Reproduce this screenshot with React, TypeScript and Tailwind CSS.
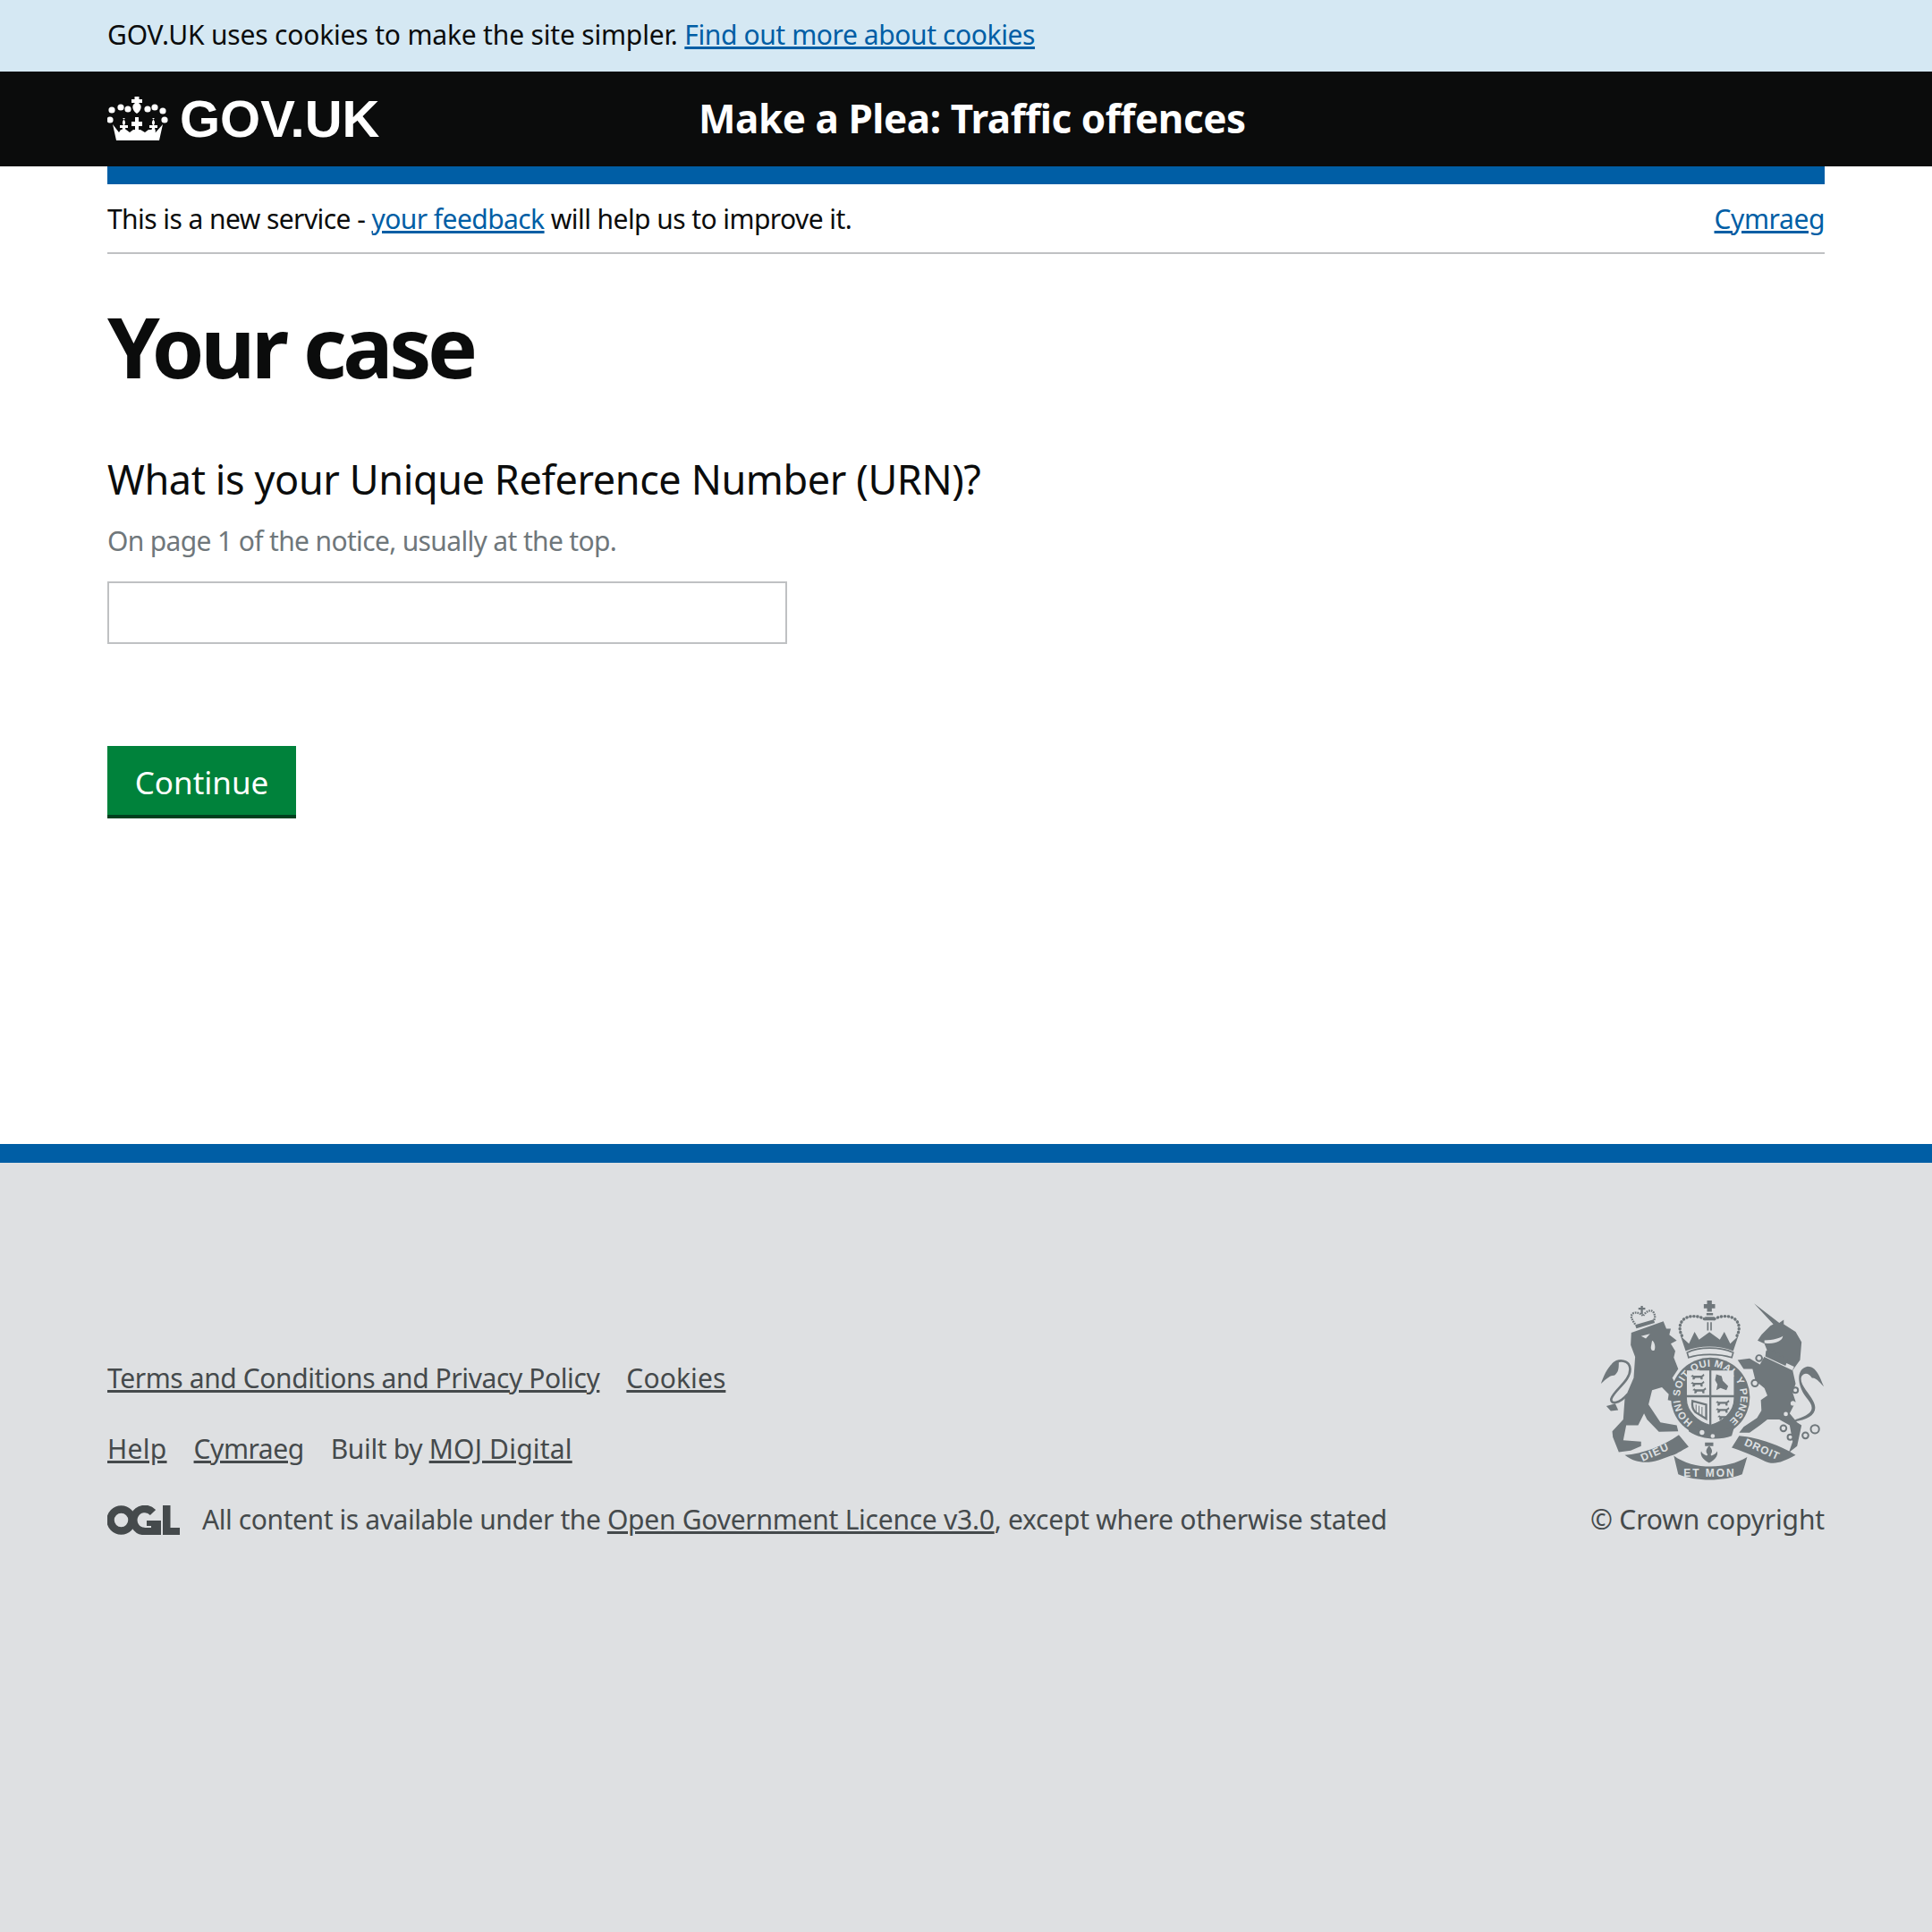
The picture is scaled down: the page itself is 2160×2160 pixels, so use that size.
const font = { fontFamily: '"Noto Sans", sans-serif' };

function CrownLogo() {
  const dots = [[5, 16], [15, 13], [23, 15], [45, 15], [53, 13], [62, 17], [3, 27], [64, 27]];
  return (
    <svg viewBox="0 0 69 52" className="h-[52px] w-[69px] shrink-0" fill="#fff">
      {dots.map(([x, y]) => (
        <circle key={`${x}-${y}`} cx={x} cy={y} r="3.6" />
      ))}
      <path d="M30.5 1h5v3h3.5v4h-3.5v1c3 1 3.5 7 -2.5 11c-6 -4 -5.500 -10 -2.500 -11v-1h-3.500v-4h3.500z" />
      <path d="M31 24h4v5h4v5h-4v6h-4v-6h-4v-5h4z" />
      <path d="M17 25c3 3 4 5 2 8h4v3h-3l1 4h-5l1 -4h-3v-3h4c-2 -3 -1 -5 2 -8z" />
      <path d="M50 25c3 3 4 5 2 8h4v3h-3l1 4h-5l1 -4h-3v-3h4c-2 -3 -1 -5 2 -8z" />
      <path d="M6 32L13 41L15 38H21L25 41L29 38H37L42 41L46 38H52L54 41L62 32L58 50H10Z" />
    </svg>
  );
}

function OglLogo() {
  return (
    <svg viewBox="0 0 81 33" className="h-[33px] w-[81px] shrink-0" fill="none">
      <circle cx="15.500" cy="16.500" r="12" stroke="#454a4c" strokeWidth="8.500" />
      <path d="M51 8A12.500 12.500 0 1 0 41.500 29" stroke="#454a4c" strokeWidth="8.500" />
      <path d="M44 17H60V33H41V25H49V23H44Z" fill="#454a4c" />
      <path d="M62 0h8.500v25H81v8H62z" fill="#454a4c" />
    </svg>
  );
}

function Passant({ x, y }: { x: number; y: number }) {
  return <path d={`M${x} ${y}l6 -6l4 3h26l8 -6l2 6l-6 4v9h-6l-2 -6h-16l-4 6h-6l1 -9z`} />;
}

function Crest() {
  const c = "#6f777b";
  const bg = "#dee0e2";
  return (
    <svg viewBox="88 64 754 614" className="h-[204px] w-[251px]" fill={c}>
      {/* lion crown */}
      <path d="M205 150C195 135 185 120 200 112C212 108 225 115 232 122C240 108 260 95 268 112C275 125 270 135 265 140" fill="none" stroke={c} strokeWidth="7" strokeDasharray="5 3" />
      <path d="M216 94h8v-6h7v6h8v7h-8v15h-7v-15h-8z" />
      <path d="M205 152l62 -18l4 11l-62 19z" />
      {/* lion */}
      <path d="M192 178L300 140L310 165L325 165L320 185L345 205L325 215L340 240L335 262L350 300L330 330L360 385L345 412L315 405L318 385L295 362L262 372L250 420L290 480L345 490L350 510L285 512L245 470L235 450L215 490L175 490L165 540L225 545L225 560L190 575L150 580L130 530L128 510L165 470L170 400L200 330L205 260L190 220Z" />
      <path d="M225 190l30 -8l-14 16zM262 205c10 5 12 25 8 32c-8 5 -12 -2 -12 -10z" fill={bg} />
      <path d="M180 385C150 420 120 420 125 400C135 370 190 340 188 300C186 270 150 265 130 285" fill="none" stroke={c} strokeWidth="8" />
      <path d="M150 272C120 275 100 320 90 350C110 330 125 320 135 322C150 310 150 300 150 272Z" />
      <path d="M108 425l30 -8l10 22l-25 3z" />
      {/* unicorn */}
      <path d="M605 80L690 145L705 135L705 150L745 175L765 210L760 270L735 305L745 350L735 380L745 410L725 450L750 480L765 490L750 560L722 582L735 545L725 490L690 470L650 470L625 490L590 515L555 515L570 495L615 465L630 440L628 405L650 390L640 365L610 340L600 300L570 300L550 270L590 265L625 285L650 240L640 215L617 205L630 185L660 155L670 150Z" />
      <path d="M640 245l100 48l-6 12l-98 -47z" fill={bg} />
      <path d="M645 240l12 -8l6 10l10 -5l4 12l12 -3l2 12l12 -2l2 12l14 0l-8 22l-68 -32z" />
      <path d="M640 204c30 0 55 -8 62 -15c0 18 -30 30 -62 24z" fill={bg} />
      <path d="M745 470C810 450 810 430 780 395C750 355 745 300 785 292C815 292 825 325 840 360C820 340 815 330 800 330C790 315 775 310 765 325C755 350 790 380 805 410C825 450 790 470 740 478Z" />
      <g fill={bg} stroke={c} strokeWidth="6">
        <circle cx="622" cy="264" r="10" />
        <circle cx="608" cy="348" r="11" />
        <circle cx="744" cy="372" r="9" />
        <circle cx="704" cy="500" r="10" />
        <circle cx="727" cy="530" r="9" />
        <circle cx="778" cy="524" r="10" />
        <circle cx="810" cy="503" r="14" />
      </g>
      <g fill={bg}>
        <circle cx="736" cy="416" r="8" />
        <circle cx="712" cy="452" r="7" />
      </g>
      {/* royal crown */}
      <path d="M447 70h16v12h11v14h-11v12h-16v-12h-11v-14h11z" />
      <path d="M445 112h22v8h-22zM447 143h5v28h-5zM458 143h5v28h-5zM440 125h32v12h-32z" />
      <path d="M375 240L358 190L386 215L405 175L420 202L455 176L490 202L505 175L525 215L552 190L535 240C490 220 420 220 375 240Z" />
      <path d="M438 132C420 122 390 118 370 132C350 148 352 175 368 198M472 132C490 122 520 118 540 132C560 148 558 175 542 198" fill="none" stroke={c} strokeWidth="10" strokeDasharray="1 11" strokeLinecap="round" />
      <path d="M380 245C420 225 490 225 535 245L530 262C490 248 420 248 385 262Z" fill={bg} stroke={c} strokeWidth="5" />
      {/* garter */}
      <circle cx="458" cy="395" r="133" />
      {/* shield */}
      <path d="M372 298H544V400C544 450 500 485 458 496C416 485 372 450 372 400Z" fill={bg} stroke={c} strokeWidth="4" transform="translate(458 395) scale(0.94) translate(-458 -395)" />
      <path d="M458 295V495M376 392H540" stroke={c} strokeWidth="7" />
      <Passant x={392} y={326} />
      <Passant x={392} y={350} />
      <Passant x={398} y={372} />
      <path d="M478 318l18 6l4 16l18 18l-6 14l-20 -8l-14 8l4 -20l-8 -14z" />
      <Passant x={476} y={414} />
      <Passant x={476} y={438} />
      <Passant x={482} y={462} />
      <path d="M398 408L444 420V468L408 446C398 436 396 420 398 408Z" fill="none" stroke={c} strokeWidth="7" />
      <path d="M410 420V446M420 424V454M430 428V460" stroke={c} strokeWidth="3" />
      <path d="M390 484C440 520 490 520 540 490L530 525C490 540 430 540 385 510Z" />
      <circle cx="430" cy="514" r="8" fill={bg} />
      <circle cx="466" cy="526" r="7" fill={bg} />
      <defs>
        <path id="garter" d="M400 478.500A102 102 0 1 1 516 478.500" />
      </defs>
      <text fill={bg} fontFamily="Liberation Sans" fontSize="34" fontWeight="700" letterSpacing="1.200">
        <textPath href="#garter">HONI SOIT QUI MAL Y PENSE</textPath>
      </text>
      {/* motto */}
      <path d="M170 590C230 585 300 560 352 522L385 562C360 575 340 590 325 592C280 610 225 632 170 590Z" />
      <path d="M555 525C620 530 700 560 745 590C700 615 670 625 640 610C600 590 560 575 530 565Z" />
      <path d="M335 592C400 640 510 640 582 597L565 655C500 680 410 680 350 655Z" />
      <text fill={bg} fontFamily="Liberation Sans" fontSize="36" fontWeight="700" x="368" y="662" letterSpacing="6">ET MON</text>
      <text fill={bg} fontFamily="Liberation Sans" fontSize="36" fontWeight="700" x="230" y="612" transform="rotate(-24 230 612)" letterSpacing="4">DIEU</text>
      <text fill={bg} fontFamily="Liberation Sans" fontSize="36" fontWeight="700" x="570" y="556" transform="rotate(24 570 556)" letterSpacing="3">DROIT</text>
      {/* fleur */}
      <path d="M440 548h28v12h-28zM455 556c-8 12 -16 20 -6 32l-3 4c-14 -4 -20 -14 -18 -16c-6 10 2 30 26 40c24 -10 32 -30 26 -40c2 2 -4 12 -18 16l-3 -4c10 -12 2 -20 -6 -32z" />
    </svg>
  );
}

export default function App() {
  return (
    <div className="flex min-h-[2160px] flex-col bg-white text-[#0b0c0c]" style={font}>
      <div className="h-[80px] bg-[#d5e8f3] px-[120px] text-[30px] leading-[78px] tracking-[-0.18px]">
        GOV.UK uses cookies to make the site simpler.{" "}
        <a className="tracking-[-0.4px] text-[#005ea5] underline">Find out more about cookies</a>
      </div>

      <header className="flex h-[106px] items-center bg-[#0b0c0c] px-[120px]">
        <div className="flex w-[661px] items-center gap-[12px]">
          <CrownLogo />
          <span className="text-[58px] font-bold leading-none text-white" style={{ fontFamily: '"Liberation Sans", sans-serif' }}>
            GOV.UK
          </span>
        </div>
        <span className="mb-[2px] text-[44px] font-bold tracking-[-0.45px] text-white">Make a Plea: Traffic offences</span>
      </header>

      <div className="mx-[120px] h-[20px] bg-[#005ea5]" />

      <div className="mx-[120px] flex h-[78px] items-center justify-between border-b-2 border-[#bfc1c3] text-[30px] tracking-[-0.57px]">
        <p>
          This is a new service - <a className="text-[#005ea5] underline">your feedback</a> will help us to improve it.
        </p>
        <a className="tracking-[-0.4px] text-[#005ea5] underline">Cymraeg</a>
      </div>

      <main className="flex h-[995px] flex-col px-[120px]">
        <h1 className="mt-[45px] text-[94px] font-bold leading-[116px] tracking-[-4.3px]">Your case</h1>
        <label className="mt-[61px] text-[45px] leading-[60px] tracking-[-0.4px]">What is your Unique Reference Number (URN)?</label>
        <p className="mt-[19px] text-[30px] leading-[40px] tracking-[-0.65px] text-[#6f777b]">On page 1 of the notice, usually at the top.</p>
        <input className="mt-[25px] h-[70px] w-[760px] border-2 border-[#bfc1c3] bg-white" />
        <button className="mt-[114px] h-[81px] w-[211px] border-b-4 border-[#00401e] bg-[#00823b] pt-[5px] text-[35px] text-white">Continue</button>
      </main>

      <footer className="flex flex-1 flex-col border-t-[21px] border-[#005ea5] bg-[#dee0e2] px-[120px] pt-[152px] text-[30px] tracking-[-0.3px] text-[#454a4c]">
        <div className="flex items-end justify-between">
          <div className="flex flex-col gap-[39px] leading-[40px]">
            <div className="flex gap-[30px]">
              <a className="tracking-[-0.4px] underline">Terms and Conditions and Privacy Policy</a>
              <a className="tracking-[0.1px] underline">Cookies</a>
            </div>
            <div className="flex gap-[30px]">
              <a className="tracking-[0.3px] underline">Help</a>
              <a className="tracking-[-0.45px] underline">Cymraeg</a>
              <span className="tracking-[-0.35px]">Built by <a className="tracking-[0.2px] underline">MOJ Digital</a></span>
            </div>
            <div className="flex items-center gap-[25px]">
              <OglLogo />
              <span className="tracking-[-0.41px]">
                All content is available under the <a className="tracking-[-0.25px] underline">Open Government Licence v3.0</a><span className="tracking-[-0.25px]">, except where otherwise stated</span>
              </span>
            </div>
          </div>
          <div className="flex flex-col items-end gap-[23px] leading-[40px]">
            <Crest />
            <span className="tracking-[-0.15px]">© Crown copyright</span>
          </div>
        </div>
      </footer>
    </div>
  );
}
